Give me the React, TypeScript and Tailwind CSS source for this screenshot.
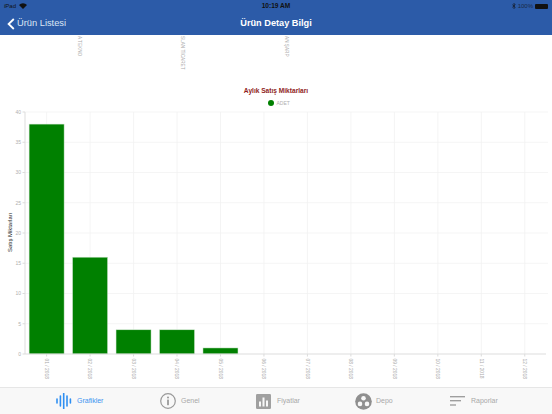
const font = { fontFamily: '"Liberation Sans", Arial, sans-serif' };

const months = ['01', '02', '03', '04', '05', '06', '07', '08', '09', '10', '11', '12'];
const values = [38, 16, 4, 4, 1];
const yTicks = [0, 5, 10, 15, 20, 25, 30, 35, 40];
const y0 = 354;
const pxPerUnit = 6.05;

function Chart() {
  return (
    <svg viewBox="0 35 552 352" className="block w-full h-full" style={font}>
      {[['A TEKNO', 78, 36], ['SLAN TİCARET', 181, 36], ['AN ŞARP', 285, 36]].map(([t, x, y]) => (
        <text key={t as string} transform={`translate(${x} ${y}) rotate(90)`} fontSize="4.7" fill="#aaa">{t}</text>
      ))}
      <text x="276" y="93.3" textAnchor="middle" fontSize="6.6" fontWeight="700" fill="#8f1d1d">Aylık Satış Miktarları</text>
      <circle cx="271" cy="103" r="3" fill="#008000" />
      <text x="276.5" y="105" fontSize="5" fill="#b0b0b0">ADET</text>

      {yTicks.map((v) => {
        const y = y0 - v * pxPerUnit;
        return (
          <g key={v}>
            {v > 0 && <line x1="25" x2="548" y1={y} y2={y} stroke="#f3f3f3" strokeWidth="0.8" />}
            <line x1="22.5" x2="25" y1={y} y2={y} stroke="#ccc" strokeWidth="0.7" />
            <text x="21" y={y + 1.8} textAnchor="end" fontSize="5" fill="#b0b0b0">{v}</text>
          </g>
        );
      })}
      {months.map((m, i) => {
        const x = 46.6 + i * 43.47;
        return (
          <g key={m}>
            <line x1={x} x2={x} y1="112" y2="354" stroke="#f1f1f1" strokeWidth="0.8" />
            <line x1={x} x2={x} y1="354" y2="356.5" stroke="#ccc" strokeWidth="0.7" />
            <text transform={`translate(${x - 1.7} 358.5) rotate(90)`} fontSize="4.9" fill="#aaa">{`${m} / 2018`}</text>
          </g>
        );
      })}
      {values.map((v, i) => {
        const x = 46.6 + i * 43.47;
        const h = v * pxPerUnit;
        return <rect key={i} x={x - 17.5} y={y0 - h} width="35" height={h} fill="#008000" stroke="#cfe6cf" strokeWidth="0.5" />;
      })}
      <line x1="25" x2="25" y1="112" y2="354" stroke="#ddd" strokeWidth="1" />
      <line x1="25" x2="546" y1="354" y2="354" stroke="#ddd" strokeWidth="1" />
      <text transform="translate(12 252) rotate(-90)" fontSize="5.9" fill="#222">Satış Miktarları</text>
    </svg>
  );
}

function WaveIcon() {
  const bars: [number, number, number][] = [[1, 2, 1.6], [4.4, 5, 1.6], [7.7, 7.5, 1.6], [11, 5, 1.6], [14.4, 2, 1.6]];
  return (
    <svg width="16" height="16" viewBox="0 0 16 16" fill="none" stroke="#2f8ff2" strokeLinecap="round">
      {bars.map(([x, h, w]) => <line key={x} x1={x} x2={x} y1={8 - h} y2={8 + h} strokeWidth={w} />)}
    </svg>
  );
}

function InfoIcon() {
  return (
    <svg width="16" height="16" viewBox="0 0 16 16" fill="none">
      <circle cx="8" cy="8" r="7.3" stroke="#999" strokeWidth="1.2" />
      <circle cx="8" cy="4.5" r="1" fill="#999" />
      <rect x="7.1" y="6.6" width="1.8" height="5.6" fill="#999" />
    </svg>
  );
}

function BarsIcon() {
  return (
    <svg width="15" height="15" viewBox="0 0 15 15">
      <rect width="15" height="15" rx="1.2" fill="#a0a0a0" />
      <rect x="3" y="7.5" width="2" height="5" fill="#f8f8f8" />
      <rect x="6.5" y="3.5" width="2" height="9" fill="#f8f8f8" />
      <rect x="10" y="6.5" width="2" height="6" fill="#f8f8f8" />
    </svg>
  );
}

function DepoIcon() {
  return (
    <svg width="17" height="17" viewBox="0 0 17 17">
      <circle cx="8.5" cy="8.5" r="8.3" fill="#8f8f8f" />
      <circle cx="8.5" cy="5.2" r="2.3" fill="#f8f8f8" />
      <circle cx="5" cy="10.9" r="2.3" fill="#f8f8f8" />
      <circle cx="12" cy="10.9" r="2.3" fill="#f8f8f8" />
    </svg>
  );
}

function ReportIcon() {
  return (
    <svg width="15" height="11" viewBox="0 0 15 11" stroke="#999" strokeWidth="1.3">
      <line x1="0" x2="15" y1="0.7" y2="0.7" />
      <line x1="0" x2="11" y1="4.7" y2="4.7" />
      <line x1="0" x2="6" y1="9" y2="9" />
    </svg>
  );
}

function Tab({ icon, label, active, className }: { icon: React.ReactNode; label: string; active?: boolean; className: string }) {
  return (
    <div className={`absolute top-0 h-full flex items-center ${className}`}>
      {icon}
      <span className={`text-[7px] ${active ? 'text-[#3b94f0]' : 'text-[#a8a8a8]'}`}>{label}</span>
    </div>
  );
}

export default function App() {
  return (
    <div className="w-[552px] h-[414px] flex flex-col bg-white overflow-hidden" style={font}>
      <header className="h-[35px] shrink-0 bg-[#2c5ba8] flex flex-col">
        <div className="h-[12px] flex items-center justify-between px-[4px] text-[6px] text-[#111] relative">
          <div className="flex items-center gap-[3px]">
            <span>iPad</span>
            <svg width="8" height="6" viewBox="0 0 8 6"><path d="M4 6 0 2a5.7 5.7 0 0 1 8 0Z" fill="#111" /></svg>
          </div>
          <span className="absolute left-0 right-0 text-center text-[6.6px] font-bold">10:19 AM</span>
          <div className="flex items-center gap-[2px]">
            <svg width="4" height="6" viewBox="0 0 4 6" fill="none" stroke="#111" strokeWidth="0.6"><path d="M0.3 1.6 3.2 4.3 2 5.6V0.4l1.2 1.3L0.3 4.4" /></svg>
            <span className="text-[#1a2a45]">100%</span>
            <span className="w-[13px] h-[5px] bg-[#111] rounded-[1px]" />
          </div>
        </div>
        <div className="flex-1 flex items-center relative text-white">
          <div className="flex items-center gap-[2px] pl-[7px] text-[9.3px] text-[#dce6f5]">
            <svg width="8" height="12" viewBox="0 0 8 12" fill="none" stroke="#fff" strokeWidth="1.8"><path d="M6.8 1 1.6 6l5.2 5" /></svg>
            <span>Ürün Listesi</span>
          </div>
          <span className="absolute left-0 right-0 text-center text-[9.2px] font-bold pointer-events-none">Ürün Detay Bilgi</span>
        </div>
      </header>
      <main className="flex-1 min-h-0">
        <Chart />
      </main>
      <nav className="h-[27px] shrink-0 bg-[#f8f8f8] border-t border-[#e6e6e6] relative">
        <Tab className="left-[56px] gap-[5px]" active icon={<WaveIcon />} label="Grafikler" />
        <Tab className="left-[160px] gap-[5px]" icon={<InfoIcon />} label="Genel" />
        <Tab className="left-[256px] gap-[6px]" icon={<BarsIcon />} label="Fiyatlar" />
        <Tab className="left-[355px] gap-[4px]" icon={<DepoIcon />} label="Depo" />
        <Tab className="left-[450px] gap-[6px]" icon={<ReportIcon />} label="Raporlar" />
      </nav>
    </div>
  );
}
